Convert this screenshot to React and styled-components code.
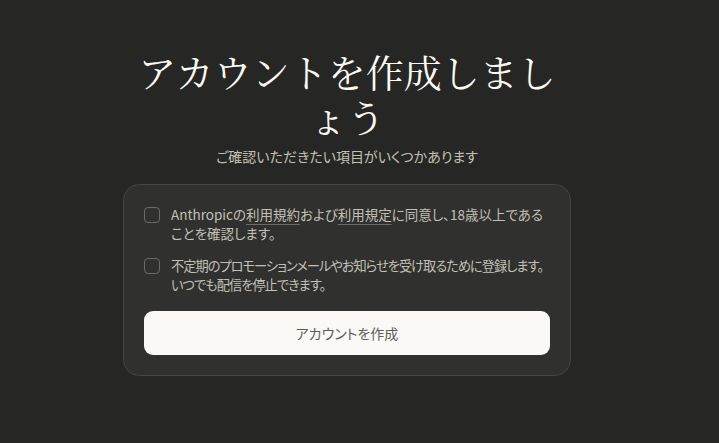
import styled, { createGlobalStyle } from "styled-components";

const GlobalStyle = createGlobalStyle`
    html, body {
        margin: 0;
        padding: 0;
        background: #262624;
    }
    body {
        font-family: "Noto Sans CJK JP", "Noto Sans", sans-serif;
    }
`

const Page = styled.div`
    width: 719px;
    height: 443px;
    box-sizing: border-box;
    padding: 48px 25px 0 0;
    display: flex;
    justify-content: center;
    background: #262624;
`

const Column = styled.div`
    width: 448px;
    display: flex;
    flex-direction: column;
    align-items: center;
`

const Title = styled.h1`
    margin: 0;
    font-family: "Noto Serif CJK JP", "Liberation Serif", serif;
    font-weight: 400;
    font-size: 38px;
    line-height: 45px;
    color: #faf9f5;
    text-align: center;
`

const Subtitle = styled.p`
    margin: 8px 0 0;
    font-size: 14px;
    line-height: 20px;
    color: #c2c0b6;
    font-feature-settings: "palt";
`

const Card = styled.div`
    box-sizing: border-box;
    width: 448px;
    margin-top: 18px;
    padding: 20px;
    background: #30302e;
    border: 1px solid #45443f;
    border-radius: 16px;
    display: flex;
    flex-direction: column;
    gap: 13px;
`

const Item = styled.label`
    display: flex;
    align-items: flex-start;
    gap: 11px;
    font-size: ${(p) => (p.$tight ? "13.2px" : "13.5px")};
    letter-spacing: ${(p) => (p.$tight ? "-0.95px" : "0")};
    line-height: 19px;
    color: #c2c0b6;
    font-feature-settings: "palt";
`

const Box = styled.span`
    flex: none;
    width: 16px;
    height: 16px;
    box-sizing: border-box;
    margin-top: 2px;
    border: 1px solid #6b6a65;
    border-radius: 4px;
`

const Link = styled.span`
    text-decoration: underline;
    text-decoration-color: #6b6a65;
    text-underline-offset: 4px;
`

const Button = styled.button`
    margin-top: 4px;
    height: 44px;
    border: none;
    border-radius: 9px;
    background: #faf9f5;
    color: #5e5d59;
    font-family: "Noto Sans CJK JP", sans-serif;
    font-size: 14px;
    font-feature-settings: "palt";
`

export default function App() {
    return (
        <Page>
            <GlobalStyle />
            <Column>
                <Title>アカウントを作成しましょう</Title>
                <Subtitle>ご確認いただきたい項目がいくつかあります</Subtitle>
                <Card>
                    <Item>
                        <Box />
                        <span>
                            Anthropicの<Link>利用規約</Link>および<Link>利用規定</Link>に同意し、18歳以上であることを確認します。
                        </span>
                    </Item>
                    <Item $tight>
                        <Box />
                        <span>
                            不定期のプロモーションメールやお知らせを受け取るために登録します。
                            <br />
                            いつでも配信を停止できます。
                        </span>
                    </Item>
                    <Button>アカウントを作成</Button>
                </Card>
            </Column>
        </Page>
    );
}
